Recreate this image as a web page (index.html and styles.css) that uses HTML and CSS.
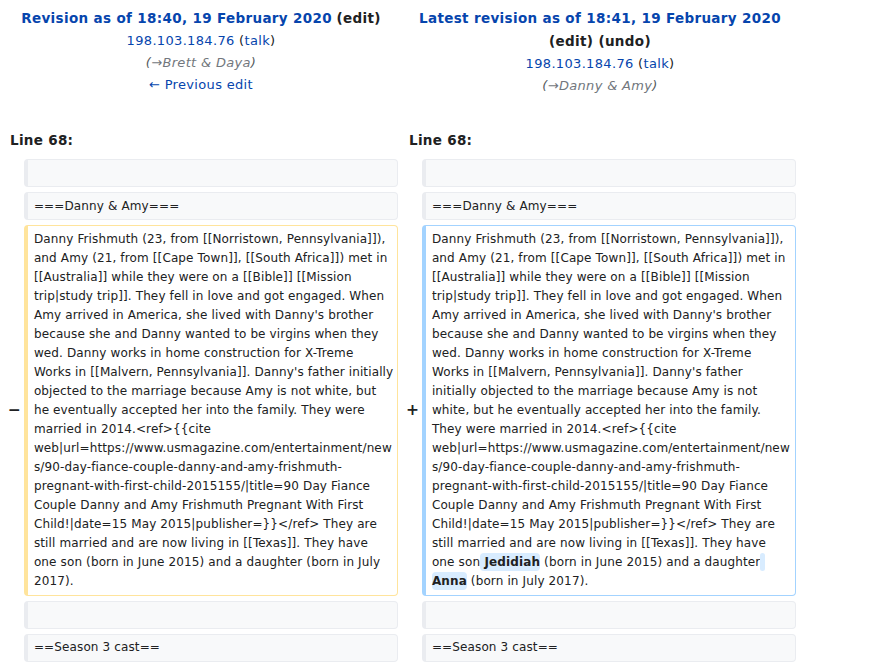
FILE: index.html
```html
<!DOCTYPE html>
<html lang="en">
<head>
<meta charset="utf-8">
<title>Difference between revisions</title>
<link rel="stylesheet" href="styles.css">
</head>
<body>
<div class="diff">
  <div class="diff-title left">
    <div><a class="rev" href="#">Revision as of 18:40, 19 February 2020</a> <span class="tool">(<a href="#">edit</a>)</span></div>
    <div><a href="#">198.103.184.76</a> <span class="paren">(<a href="#">talk</a>)</span></div>
    <div class="comment">(<span class="sec">→Brett &amp; Daya</span>)</div>
    <div><a href="#">← Previous edit</a></div>
  </div>
  <div class="diff-title right">
    <div><a class="rev" href="#">Latest revision as of 18:41, 19 February 2020</a> <span class="tool">(<a href="#">edit</a>) (<a href="#">undo</a>)</span></div>
    <div><a href="#">198.103.184.76</a> <span class="paren">(<a href="#">talk</a>)</span></div>
    <div class="comment">(<span class="sec">→Danny &amp; Amy</span>)</div>
  </div>

  <div class="lineno left">Line 68:</div>
  <div class="lineno right">Line 68:</div>

  <div class="marker"></div>
  <div class="cell context"><div><br></div></div>
  <div class="marker"></div>
  <div class="cell context"><div><br></div></div>

  <div class="marker"></div>
  <div class="cell context"><div>===Danny &amp; Amy===</div></div>
  <div class="marker"></div>
  <div class="cell context"><div>===Danny &amp; Amy===</div></div>

  <div class="marker">−</div>
  <div class="cell deleted"><div class="text">Danny Frishmuth (23, from [[Norristown, Pennsylvania]]),<br>and Amy (21, from [[Cape Town]], [[South Africa]]) met in<br>[[Australia]] while they were on a [[Bible]] [[Mission<br>trip|study trip]]. They fell in love and got engaged. When<br>Amy arrived in America, she lived with Danny's brother<br>because she and Danny wanted to be virgins when they<br>wed. Danny works in home construction for X-Treme<br>Works in [[Malvern, Pennsylvania]]. Danny's father initially<br>objected to the marriage because Amy is not white, but<br>he eventually accepted her into the family. They were<br>married in 2014.&lt;ref&gt;{{cite<br>web|url=https://www.usmagazine.com/entertainment/new<br>s/90-day-fiance-couple-danny-and-amy-frishmuth-<br>pregnant-with-first-child-2015155/|title=90 Day Fiance<br>Couple Danny and Amy Frishmuth Pregnant With First<br>Child!|date=15 May 2015|publisher=}}&lt;/ref&gt; They are<br>still married and are now living in [[Texas]]. They have<br>one son (born in June 2015) and a daughter (born in July<br>2017).</div></div>
  <div class="marker">+</div>
  <div class="cell added"><div class="text">Danny Frishmuth (23, from [[Norristown, Pennsylvania]]),<br>and Amy (21, from [[Cape Town]], [[South Africa]]) met in<br>[[Australia]] while they were on a [[Bible]] [[Mission<br>trip|study trip]]. They fell in love and got engaged. When<br>Amy arrived in America, she lived with Danny's brother<br>because she and Danny wanted to be virgins when they<br>wed. Danny works in home construction for X-Treme<br>Works in [[Malvern, Pennsylvania]]. Danny's father<br>initially objected to the marriage because Amy is not<br>white, but he eventually accepted her into the family.<br>They were married in 2014.&lt;ref&gt;{{cite<br>web|url=https://www.usmagazine.com/entertainment/new<br>s/90-day-fiance-couple-danny-and-amy-frishmuth-<br>pregnant-with-first-child-2015155/|title=90 Day Fiance<br>Couple Danny and Amy Frishmuth Pregnant With First<br>Child!|date=15 May 2015|publisher=}}&lt;/ref&gt; They are<br>still married and are now living in [[Texas]]. They have<br>one son<ins class="change"> Jedidiah</ins> (born in June 2015) and a daughter<ins class="change"> </ins><br><ins class="change">Anna</ins> (born in July 2017).</div></div>

  <div class="marker"></div>
  <div class="cell context"><div><br></div></div>
  <div class="marker"></div>
  <div class="cell context"><div><br></div></div>

  <div class="marker"></div>
  <div class="cell context"><div>==Season 3 cast==</div></div>
  <div class="marker"></div>
  <div class="cell context"><div>==Season 3 cast==</div></div>
</div>
</body>
</html>
```

FILE: styles.css
```css
html, body {
  background: #ffffff;
}
body {
  margin: 7px 8px 8px;
  font-family: "DejaVu Sans", sans-serif;
  font-size: 13px;
  line-height: 22px;
  letter-spacing: 0.33px;
  color: #202122;
}
a {
  color: #0645ad;
  text-decoration: none;
}
.diff {
  display: grid;
  grid-template-columns: 16px 374px 24px 374px;
  row-gap: 5px;
  align-items: stretch;
}
.diff-title {
  grid-column: span 2;
  text-align: center;
}
.diff-title.left {
  padding-right: 4px;
}
.diff-title.right {
  padding-left: 6px;
}
.diff-title .rev {
  font-weight: bold;
  font-size: 13.5px;
  letter-spacing: 0.34px;
}
.tool {
  font-weight: bold;
  font-size: 13.5px;
  letter-spacing: 0.34px;
  color: #202122;
}
.tool a {
  color: #202122;
}
.paren {
  color: #202122;
}
.comment {
  font-style: italic;
  color: #54595d;
}
.comment .sec {
  color: #72777d;
}
.lineno {
  grid-column: span 2;
  font-weight: bold;
  font-size: 13.5px;
  letter-spacing: 0.3px;
  margin-top: 27px;
  margin-bottom: 3px;
  line-height: 22px;
}
.lineno.left {
  padding-left: 2px;
}
.lineno.right {
  padding-left: 11px;
}
.marker {
  align-self: center;
  text-align: right;
  padding-right: 3px;
  font-weight: bold;
  font-size: 15.5px;
  line-height: 19px;
  letter-spacing: 0;
}
.cell {
  font-size: 12px;
  line-height: 19px;
  letter-spacing: 0.13px;
  padding: 3.6px 5.9px;
  border: 1px solid #eaecf0;
  border-left-width: 4px;
  border-radius: 4px;
  color: #202122;
}
.cell > div {
  white-space: pre-wrap;
  overflow-wrap: break-word;
}
.cell > .text {
  white-space: pre;
}
.context {
  background: #f8f9fa;
  border-color: #eaecf0;
}
.deleted {
  background: #ffffff;
  border-color: #ffe49c;
}
.added {
  background: #ffffff;
  border-color: #a3d3ff;
}
.change {
  text-decoration: none;
  font-weight: bold;
  background: #d8ecff;
  border-radius: 4px;
  padding: 2px 0;
}
```
